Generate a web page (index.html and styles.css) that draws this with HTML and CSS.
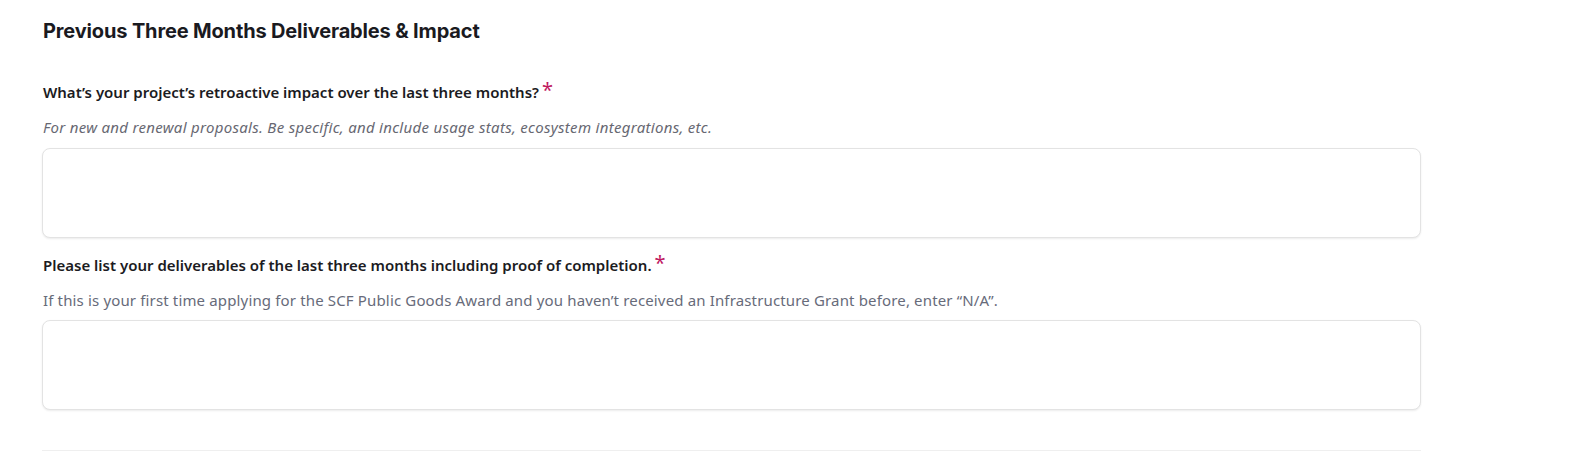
FILE: index.html
```html
<!DOCTYPE html>
<html lang="en">
<head>
<meta charset="utf-8">
<link rel="stylesheet" href="styles.css">
</head>
<body>
<main class="section">
  <h2 class="section-title">Previous Three Months Deliverables &amp; Impact</h2>
  <div class="field field-first">
    <label class="field-label">What’s your project’s retroactive impact over the last three months?<span class="req">*</span></label>
    <p class="field-hint hint-italic">For new and renewal proposals. Be specific, and include usage stats, ecosystem integrations, etc.</p>
    <textarea class="field-input"></textarea>
  </div>
  <div class="field">
    <label class="field-label">Please list your deliverables of the last three months including proof of completion.<span class="req">*</span></label>
    <p class="field-hint">If this is your first time applying for the SCF Public Goods Award and you haven’t received an Infrastructure Grant before, enter “N/A”.</p>
    <textarea class="field-input"></textarea>
  </div>
  <hr class="divider">
</main>
</body>
</html>
```

FILE: styles.css
```css
html, body {
  margin: 0;
  padding: 0;
  background: #ffffff;
}
.section {
  width: 1379px;
  padding: 17px 0 0 42px;
  display: flex;
  flex-direction: column;
}
.section-title {
  margin: 0 0 0 1px;
  font-family: Inter, "Liberation Sans", sans-serif;
  font-weight: 700;
  font-size: 20px;
  line-height: 28px;
  color: #1a1a1f;
  letter-spacing: -0.15px;
}
.field {
  display: flex;
  flex-direction: column;
  margin-top: 17px;
}
.field-first {
  margin-top: 37px;
}
.field-label {
  margin-left: 1px;
  font-family: "Noto Sans", "Open Sans", sans-serif;
  font-weight: 600;
  font-size: 15px;
  line-height: 20px;
  color: #1b1b22;
}
.req {
  color: #c0195f;
  font-weight: 400;
  font-size: 20px;
  position: relative;
  top: -1px;
  margin-left: 3px;
  line-height: 0;
}
.field-hint {
  margin: 15px 0 0 1px;
  font-family: "Noto Sans", "Open Sans", sans-serif;
  font-size: 15px;
  line-height: 20px;
  color: #676b7a;
  letter-spacing: 0.15px;
}
.hint-italic {
  font-style: italic;
  color: #676872;
  letter-spacing: 0.3px;
}
.field-input {
  box-sizing: border-box;
  margin: 10px 0 0 0;
  height: 90px;
  width: 100%;
  border: 1px solid #e3e3e3;
  border-radius: 8px;
  box-shadow: 0 1px 2px rgba(0, 0, 0, 0.08);
  resize: none;
  background: #fff;
  outline: none;
}
.field-first .field-input {
  margin-top: 11px;
}
.divider {
  margin: 40px 0 0 0;
  border: 0;
  border-top: 1px solid #efefef;
  height: 0;
  width: 100%;
}
```
